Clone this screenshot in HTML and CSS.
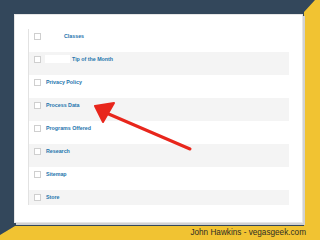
FILE: index.html
```html
<!DOCTYPE html>
<html>
<head>
  <meta charset="UTF-8">
  <title>Pages</title>
  <link rel="stylesheet" href="styles.css">
</head>
<body>
  <div class="slide">
    <div class="card">
      <div class="page-list">
        <div class="row">
          <span class="check"></span>
          <a class="page-title child">Classes</a>
        </div>
        <div class="row">
          <span class="check"></span>
          <span class="blank"></span>
          <a class="page-title">Tip of the Month</a>
        </div>
        <div class="row">
          <span class="check"></span>
          <a class="page-title">Privacy Policy</a>
        </div>
        <div class="row">
          <span class="check"></span>
          <a class="page-title">Process Data</a>
        </div>
        <div class="row">
          <span class="check"></span>
          <a class="page-title">Programs Offered</a>
        </div>
        <div class="row">
          <span class="check"></span>
          <a class="page-title">Research</a>
        </div>
        <div class="row">
          <span class="check"></span>
          <a class="page-title">Sitemap</a>
        </div>
        <div class="row">
          <span class="check"></span>
          <a class="page-title">Store</a>
        </div>
      </div>
    </div>
    <div class="credit">John Hawkins - vegasgeek.com</div>
  </div>

  <svg class="arrow" viewBox="0 0 320 240" width="320" height="240">
    <line x1="190" y1="149" x2="104" y2="112" stroke="#e8261c" stroke-width="3" stroke-linecap="round"/>
    <polygon points="95,106 114,103 103,122" fill="#e8261c" stroke="#e8261c" stroke-width="2" stroke-linejoin="round"/>
  </svg>
</body>
</html>
```

FILE: styles.css
```css
:root {
  --navy: #33475b;
  --yellow: #f1c332;
  --link-blue: #2574ad;
  --row-gray: #f4f4f4;
  --line-gray: #e2e2e2;
}

body {
  margin: 0;
  width: 320px;
  height: 240px;
  overflow: hidden;
  background: var(--yellow);
  font-family: "Liberation Sans", Arial, sans-serif;
}

.slide {
  position: relative;
  width: 320px;
  height: 240px;
  padding: 14px 0 0 14px;
  box-sizing: border-box;
}

/* navy backdrop, cut diagonally at the top right and bottom left */
.slide::before {
  content: "";
  position: absolute;
  inset: 0;
  background: var(--navy);
  clip-path: polygon(0 0, 315px 0, 304px 12px, 304px 226px, 15px 226px, 0 235px);
}

.card {
  position: relative;
  width: 289px;
  height: 209px;
  background: white;
  border: 1px solid #e6e6e6;
  box-shadow: 2px 2px 0 #d2d2d2;
  padding: 14px 0 0 13px;
  box-sizing: border-box;
}

.page-list {
  width: 260px;
  height: 176px;
  overflow: hidden;
  border-left: 1px solid var(--line-gray);
}

.row {
  height: 23px;
  display: flex;
  align-items: flex-start;
  padding: 4px 0 0 5px;
  box-sizing: border-box;
}

.row:nth-child(even) {
  background: var(--row-gray);
}

.check {
  width: 5px;
  height: 5px;
  border: 1px solid #cfcfcf;
  background: white;
  flex-shrink: 0;
}

.page-title {
  margin-left: 5px;
  font-size: 5.3px;
  font-weight: 700;
  line-height: 6px;
  color: var(--link-blue);
  text-decoration: none;
}

.page-title.child {
  margin-left: 23px;
}

.blank {
  width: 25px;
  height: 8px;
  margin: -1px 0 0 4px;
  background: white;
  flex-shrink: 0;
}

.blank + .page-title {
  margin-left: 2px;
}

.credit {
  position: relative;
  margin-top: 4px;
  padding-right: 14px;
  text-align: right;
  font-size: 8.2px;
  line-height: 11px;
  color: #2f2e24;
}

.arrow {
  position: absolute;
  top: 0;
  left: 0;
  pointer-events: none;
}
```
